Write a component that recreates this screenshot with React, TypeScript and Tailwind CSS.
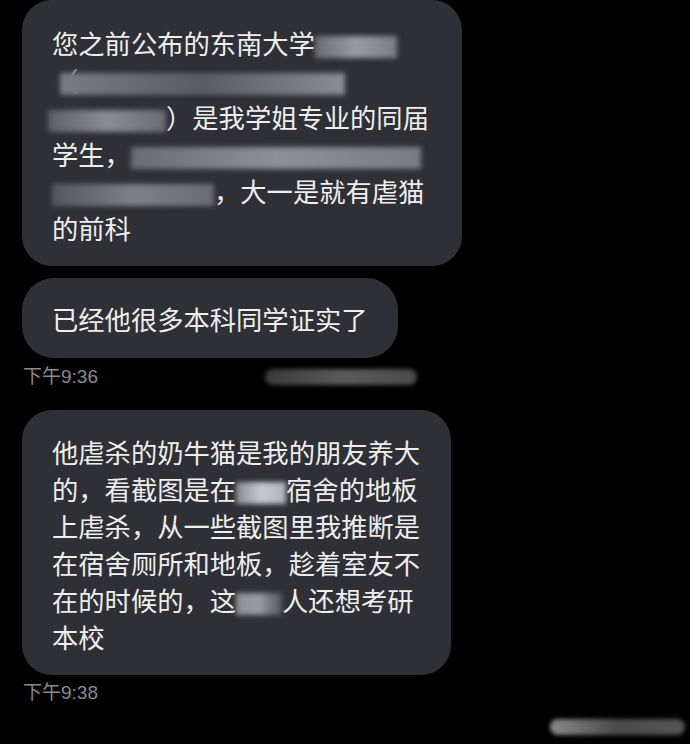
import React from "react";

const font = { fontFamily: '"Noto Sans CJK SC", "Noto Sans", sans-serif' };
const tsFont = { fontFamily: '"Liberation Sans", "Noto Sans CJK SC", sans-serif' };

function Blur({ w, cls = "" }: { w: number; cls?: string }) {
  return (
    <span
      className={`inline-block h-[22px] align-middle blur-[2.5px] ${cls}`}
      style={{ width: w }}
    />
  );
}

function Line({ children }: { children: React.ReactNode }) {
  return <div className="whitespace-nowrap h-[37px] leading-[37px]">{children}</div>;
}

export default function App() {
  return (
    <div
      className="w-[690px] h-[744px] bg-black overflow-hidden relative text-[#eeeeee]"
      style={font}
    >
      <div className="flex flex-col items-start pl-[22px]">
        {/* bubble 1 */}
        <div className="w-[440px] bg-[#2e3036] rounded-[30px] pl-[30px] pr-[20px] pt-[24px] pb-[20px] text-[26.3px]">
          <Line>
            您之前公布的东南大学
            <Blur w={82} cls="bg-gradient-to-r from-[#6a6c72] via-[#9a9ca2] to-[#7a7c82]" />
          </Line>
          <Line>
            <span className="text-[#9a9ca2]">（</span>
            <span className="ml-[-18px]" />
            <Blur w={285} cls="bg-gradient-to-r from-[#7a7c82] via-[#5a5c62] to-[#8a8c92]" />
          </Line>
          <Line>
            <span className="ml-[-4px]" />
            <Blur w={118} cls="bg-gradient-to-r from-[#5e6066] via-[#8a8c92] to-[#6a6c72]" />
            ）是我学姐专业的同届
          </Line>
          <Line>
            学生，
            <Blur w={290} cls="bg-gradient-to-r from-[#6a6c72] via-[#8e9096] to-[#7a7c82]" />
          </Line>
          <Line>
            <Blur w={162} cls="bg-gradient-to-r from-[#55575d] via-[#7e8086] to-[#6a6c72]" />
            ，大一是就有虐猫
          </Line>
          <Line>的前科</Line>
        </div>

        {/* bubble 2 */}
        <div className="mt-[12px] bg-[#2e3036] rounded-[32px] pl-[30px] pr-[30px] pt-[22px] pb-[21px] text-[26.3px]">
          <Line>已经他很多本科同学证实了</Line>
        </div>

        <div className="w-full flex items-center mt-[8px] h-[22px]">
          <span className="text-[19px] text-[#8a8a8a] ml-[1px]" style={tsFont}>
            下午9:36
          </span>
          <span className="ml-[167px] inline-block w-[152px] h-[16px] rounded-full bg-gradient-to-r from-[#3a3a3a] via-[#5a5a5a] to-[#4a4a4a] blur-[2px]" />
        </div>

        {/* bubble 3 */}
        <div className="mt-[22px] w-[429px] bg-[#2e3036] rounded-[30px] pl-[30px] pr-[20px] pt-[23px] pb-[20px] text-[26.3px]">
          <Line>他虐杀的奶牛猫是我的朋友养大</Line>
          <Line>
            的，看截图是在
            <Blur w={50} cls="bg-gradient-to-r from-[#8a8c92] via-[#c8cad0] to-[#b0b2b8]" />
            宿舍的地板
          </Line>
          <Line>上虐杀，从一些截图里我推断是</Line>
          <Line>在宿舍厕所和地板，趁着室友不</Line>
          <Line>
            在的时候的，这
            <Blur w={46} cls="bg-gradient-to-r from-[#8e9096] via-[#9a9ca2] to-[#55575d]" />
            人还想考研
          </Line>
          <Line>本校</Line>
        </div>

        <div className="mt-[7px] h-[22px] flex items-center">
          <span className="text-[19px] text-[#8a8a8a] ml-[1px]" style={tsFont}>
            下午9:38
          </span>
        </div>
      </div>

      <div className="absolute left-[550px] top-[719px] w-[135px] h-[16px] rounded-full bg-gradient-to-r from-[#8a8a8a] via-[#4a4a4a] to-[#555555] blur-[2px]" />
    </div>
  );
}
